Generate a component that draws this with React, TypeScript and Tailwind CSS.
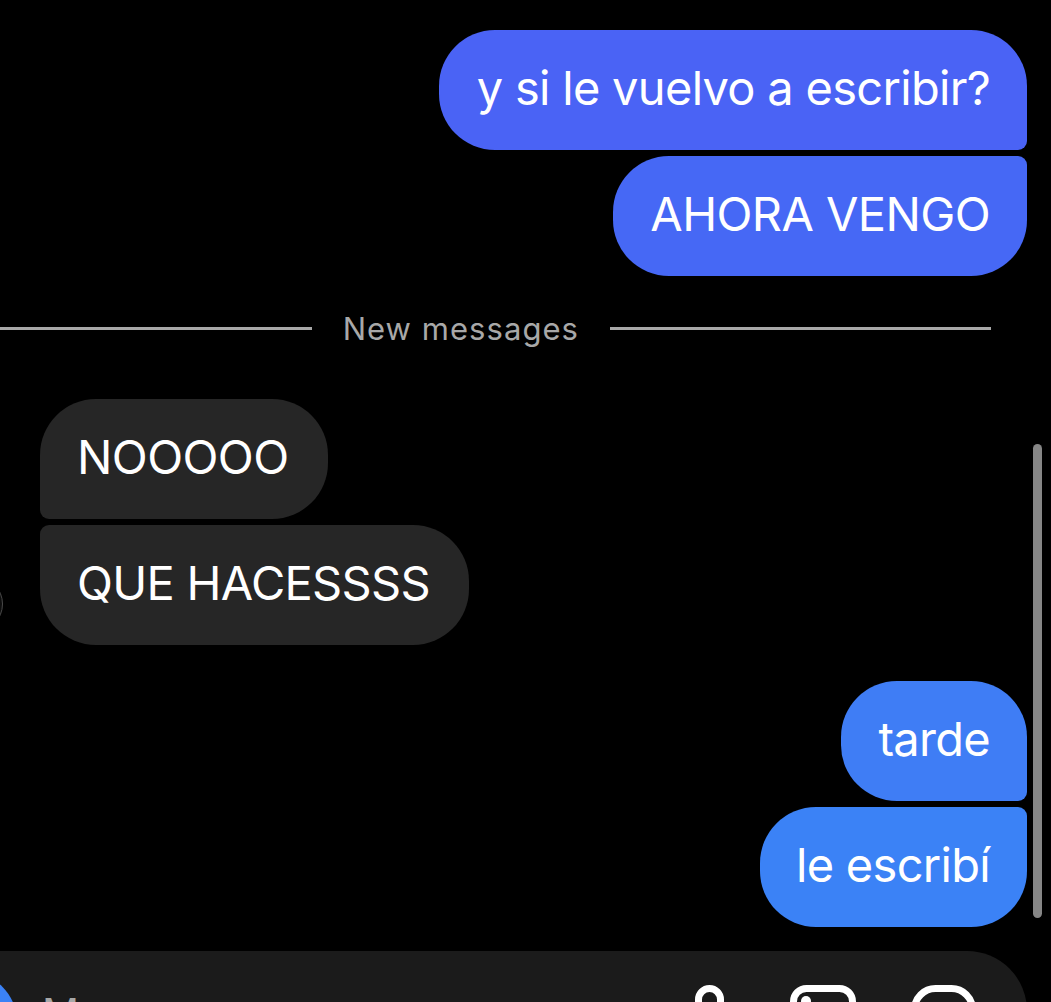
const font = "font-['Inter',sans-serif]";

function Bubble({ text, color, shape }: { text: string; color: string; shape: string }) {
  return (
    <div className={`flex h-[120px] items-center pb-[5px] text-[47px] leading-none text-white ${color} ${shape}`}>
      {text}
    </div>
  );
}

function BarIcons() {
  return (
    <div className="flex items-start text-white">
      <svg width="29" height="50" viewBox="0 0 29 50" fill="none" stroke="currentColor" strokeWidth="7" className="mr-[66px]">
        <rect x="3.5" y="3.5" width="22" height="60" rx="11" />
      </svg>
      <svg width="66" height="50" viewBox="0 0 66 50" fill="none" className="mr-[55px]">
        <rect x="3.5" y="3.5" width="59" height="70" rx="13" stroke="currentColor" strokeWidth="7" />
        <circle cx="16" cy="16" r="5" fill="currentColor" />
      </svg>
      <svg width="65" height="50" viewBox="0 0 65 50" fill="none" stroke="currentColor" strokeWidth="7">
        <rect x="3.5" y="3.5" width="58" height="70" rx="21" />
      </svg>
    </div>
  );
}

export default function App() {
  return (
    <div className={`relative flex h-[1002px] w-[1051px] flex-col overflow-hidden bg-black pt-[30px] ${font}`}>
      {/* scrollbar */}
      <div className="absolute left-[1033px] top-[444px] h-[474px] w-[9px] rounded-full bg-[#868686]" />

      <div className="flex flex-col items-end gap-[6px] pr-[24px]">
        <Bubble text="y si le vuelvo a escribir?" color="bg-[#4a63f5]" shape="rounded-[56px] rounded-br-[9px] pl-[38px] pr-[37px] tracking-[-0.7px]" />
        <Bubble text="AHORA VENGO" color="bg-[#4668f5]" shape="rounded-[56px] rounded-tr-[9px] px-[37px] tracking-[-0.6px]" />
      </div>

      <div className="mt-[38px] flex h-[28px] items-center pr-[60px]">
        <div className="h-[3px] flex-1 bg-[#a8a8a8]" />
        <span className="px-[31px] text-[31px] leading-none tracking-[1.05px] text-[#a8a8a8]">New messages</span>
        <div className="h-[3px] w-[381px] bg-[#a8a8a8]" />
      </div>

      <div className="relative mt-[57px] flex flex-col items-start gap-[6px] pl-[40px]">
        <Bubble text="NOOOOO" color="bg-[#262626]" shape="rounded-[56px] rounded-bl-[9px] pl-[37px] pr-[39px] tracking-[-0.6px]" />
        <Bubble text="QUE HACESSSS" color="bg-[#262626]" shape="rounded-[56px] rounded-tl-[9px] pl-[37px] pr-[39px] tracking-[-0.7px]" />
        {/* avatar clipped by the page edge */}
        <div className="absolute left-[-53px] top-[177px] h-[56px] w-[56px] rounded-full border border-[#4a4a4a] bg-[#0d0d0d]" />
      </div>

      <div className="mt-[36px] flex flex-col items-end gap-[6px] pr-[24px]">
        <Bubble text="tarde" color="bg-[#3f7df5]" shape="rounded-[56px] rounded-br-[9px] px-[37px] tracking-[-0.7px]" />
        <Bubble text="le escribí" color="bg-[#3b82f6]" shape="rounded-[56px] rounded-tr-[9px] pl-[36px] pr-[37px] tracking-[-0.7px]" />
      </div>

      <div className="ml-[-90px] mr-[24px] mt-[24px] flex h-[120px] shrink-0 items-start rounded-[60px] bg-[#1b1b1b] pt-[21px]">
        <div className="ml-[7px] h-[100px] w-[100px] shrink-0 rounded-full bg-[#3b82f6]" />
        <span className="ml-[25px] mt-[21px] flex-1 text-[41px] leading-none text-[#a8a8a8]">Message...</span>
        <div className="mr-[51px] mt-[13px]">
          <BarIcons />
        </div>
      </div>
    </div>
  );
}
